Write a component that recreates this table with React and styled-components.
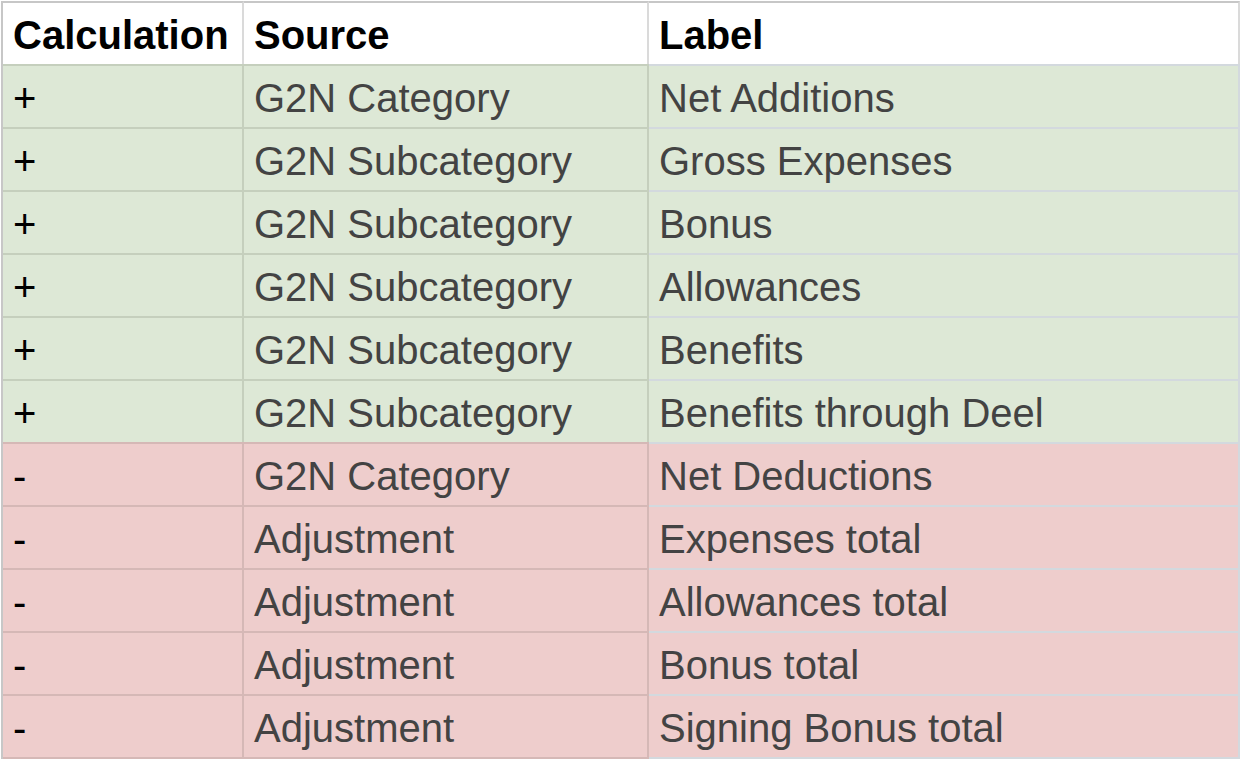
import React from 'react';
import styled, { createGlobalStyle } from 'styled-components';

const GlobalStyle = createGlobalStyle`
  html, body {
    margin: 0;
    padding: 0;
    background: #ffffff;
  }
  body {
    font-family: "Liberation Sans", Arial, sans-serif;
  }
`;

const tones = {
  header: { bg: '#ffffff', line: '#c7c7c7', side: '#dadada' },
  plus: { bg: '#dde8d6', line: '#c5cfbd', side: '#c5cfbd' },
  minus: { bg: '#eecdcc', line: '#d5b8b6', side: '#d5b8b6' },
};

const labelLine = '#d3d9de';

const Sheet = styled.div`
  margin: 1px 0 0 1px;
  width: 1239px;
  display: grid;
  grid-template-columns: 241px 405px 591px;
  border-left: 2px solid #c7c7c7;
`;

const Cell = styled.div`
  height: 57px;
  display: flex;
  align-items: center;
  padding: 4px 0 0 10px;
  box-sizing: content-box;
  background: ${(p) => tones[p.$tone].bg};
  border-top: 2px solid ${(p) => (p.$label && p.$tone !== 'header' ? labelLine : tones[p.$tone].line)};
  border-right: 2px solid ${(p) => (p.$label && p.$tone !== 'header' ? labelLine : tones[p.$tone].side)};
  border-bottom: ${(p) => (p.$last ? `2px solid ${p.$label ? labelLine : tones[p.$tone].line}` : 'none')};
  font-size: 40px;
  font-weight: ${(p) => (p.$tone === 'header' ? 700 : 400)};
  color: ${(p) => (p.$tone === 'header' || p.$sign ? '#000000' : '#434343')};
  white-space: nowrap;
  overflow: hidden;
`;

const SignCell = styled(Cell)`
  padding-left: 10px;
`;

const rows = [
  ['+', 'G2N Category', 'Net Additions'],
  ['+', 'G2N Subcategory', 'Gross Expenses'],
  ['+', 'G2N Subcategory', 'Bonus'],
  ['+', 'G2N Subcategory', 'Allowances'],
  ['+', 'G2N Subcategory', 'Benefits'],
  ['+', 'G2N Subcategory', 'Benefits through Deel'],
  ['-', 'G2N Category', 'Net Deductions'],
  ['-', 'Adjustment', 'Expenses total'],
  ['-', 'Adjustment', 'Allowances total'],
  ['-', 'Adjustment', 'Bonus total'],
  ['-', 'Adjustment', 'Signing Bonus total'],
];

export default function App() {
  return (
    <>
      <GlobalStyle />
      <Sheet>
        <Cell $tone="header">Calculation</Cell>
        <Cell $tone="header">Source</Cell>
        <Cell $tone="header" $label>Label</Cell>
        {rows.map(([calc, source, label], i) => {
          const tone = calc === '+' ? 'plus' : 'minus';
          const last = i === rows.length - 1;
          return (
            <React.Fragment key={i}>
              <SignCell $tone={tone} $sign $last={last}>{calc}</SignCell>
              <Cell $tone={tone} $last={last}>{source}</Cell>
              <Cell $tone={tone} $label $last={last}>{label}</Cell>
            </React.Fragment>
          );
        })}
      </Sheet>
    </>
  );
}
